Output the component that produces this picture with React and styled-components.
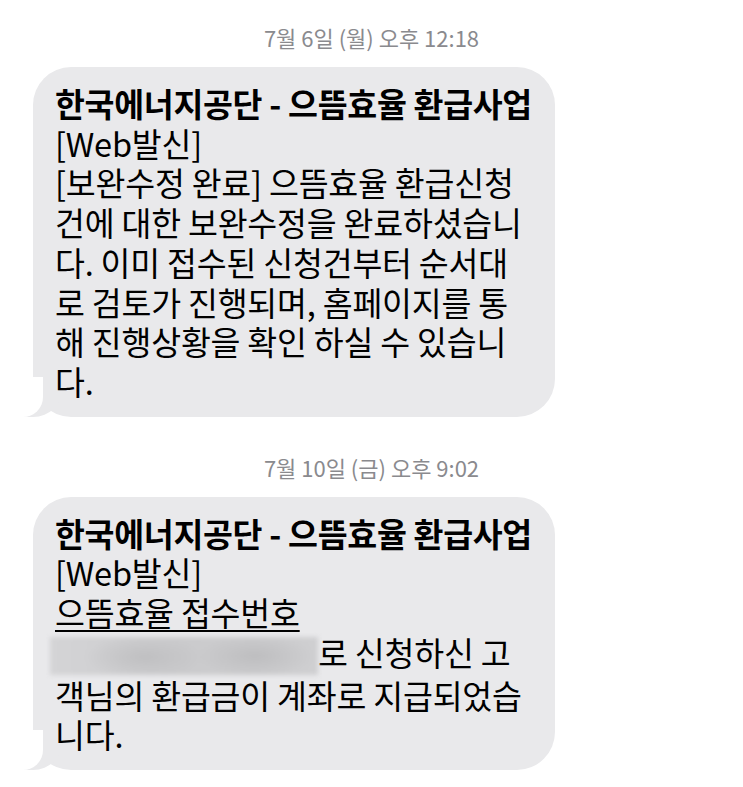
import React from "react";
import styled, { createGlobalStyle } from "styled-components";

const Global = createGlobalStyle`
  html, body { margin: 0; padding: 0; background: #ffffff; }
  body { font-family: "Noto Sans CJK KR", "Noto Sans", sans-serif; }
`;

const Page = styled.div`
  width: 743px;
  height: 787px;
  box-sizing: border-box;
  padding-top: 23px;
  display: flex;
  flex-direction: column;
  overflow: hidden;
`;

const Stamp = styled.div`
  text-align: center;
  font-size: 22px;
  line-height: 28px;
  font-weight: 400;
  color: #8a8a8e;
  margin-bottom: ${(p) => p.$gap}px;
`;

const Bubble = styled.div`
  position: relative;
  align-self: flex-start;
  margin-left: 33px;
  width: 522px;
  box-sizing: border-box;
  padding: 16px 10px 16px 22px;
  background: #e9e9eb;
  border-radius: 38px;
  color: #000;
  font-size: 32.5px;
  line-height: 39.7px;
  letter-spacing: -0.2px;
  margin-bottom: ${(p) => p.$gap}px;

  &::before {
    content: "";
    position: absolute;
    left: -10px;
    bottom: 0;
    width: 40px;
    height: 40px;
    background: #e9e9eb;
    border-bottom-right-radius: 30px;
  }
  &::after {
    content: "";
    position: absolute;
    left: -30px;
    bottom: 0;
    width: 40px;
    height: 40px;
    background: #ffffff;
    border-bottom-right-radius: 20px;
  }
`;

const Text = styled.div`
  position: relative;
  z-index: 1;
  white-space: nowrap;
`;

const Title = styled.div`
  font-weight: 700;
  letter-spacing: -0.3px;
`;

const Link = styled.span`
  text-decoration: underline;
  text-decoration-thickness: 1.5px;
  text-underline-offset: 4px;
`;

const Redacted = styled.span`
  display: inline-block;
  width: 268px;
  height: 38px;
  margin-left: -5px;
  vertical-align: -9px;
  background:
    radial-gradient(ellipse 60px 22px at 95px 20px, rgba(190,190,192,0.9), rgba(190,190,192,0) 100%),
    radial-gradient(ellipse 60px 22px at 205px 19px, rgba(188,188,190,0.9), rgba(188,188,190,0) 100%),
    linear-gradient(90deg, #d4d4d6, #cbcbcd 50%, #cfcfd1);
  filter: blur(2px);
`;

export default function App() {
  return (
    <>
      <Global />
      <Page>
        <Stamp $gap={16}>7월 6일 (월) 오후 12:18</Stamp>
        <Bubble $gap={36}>
          <Text>
            <Title>한국에너지공단 - 으뜸효율 환급사업</Title>
            [Web발신]
            <br />
            [보완수정 완료] 으뜸효율 환급신청
            <br />
            건에 대한 보완수정을 완료하셨습니
            <br />
            다. 이미 접수된 신청건부터 순서대
            <br />
            로 검토가 진행되며, 홈페이지를 통
            <br />
            해 진행상황을 확인 하실 수 있습니
            <br />
            다.
          </Text>
        </Bubble>
        <Stamp $gap={16}>7월 10일 (금) 오후 9:02</Stamp>
        <Bubble $gap={0}>
          <Text>
            <Title>한국에너지공단 - 으뜸효율 환급사업</Title>
            [Web발신]
            <br />
            <Link>으뜸효율 접수번호</Link>
            <br />
            <Redacted />로 신청하신 고
            <br />
            객님의 환급금이 계좌로 지급되었습
            <br />
            니다.
          </Text>
        </Bubble>
      </Page>
    </>
  );
}
